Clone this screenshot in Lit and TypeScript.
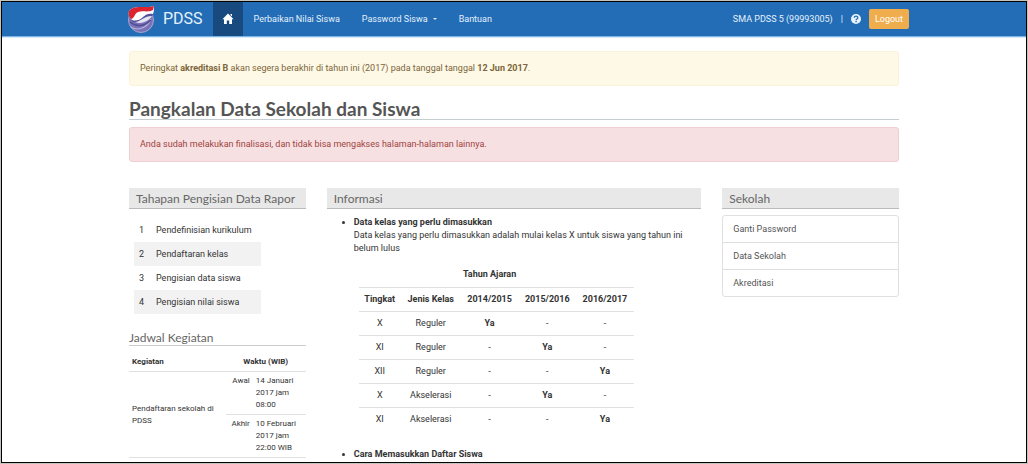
import { LitElement, html, css, svg } from "lit";
import { customElement } from "lit/decorators.js";

const STEPS = ["Pendefinisian kurikulum", "Pendaftaran kelas", "Pengisian data siswa", "Pengisian nilai siswa"];
const YEARS = ["2014/2015", "2015/2016", "2016/2017"];
const CLASSES = [
  { level: "X", kind: "Reguler", year: 0 },
  { level: "XI", kind: "Reguler", year: 1 },
  { level: "XII", kind: "Reguler", year: 2 },
  { level: "X", kind: "Akselerasi", year: 1 },
  { level: "XI", kind: "Akselerasi", year: 2 },
];
const LINKS = ["Ganti Password", "Data Sekolah", "Akreditasi"];

const logo = svg`
  <svg class="logo" viewBox="0 0 28 28" aria-hidden="true">
    <circle cx="14" cy="15" r="12.500" fill="#7a72b6" stroke="#a9a4cf" stroke-width="1"/>
    <path d="M4 22c6 4 16 2 20-8" fill="none" stroke="#b9b4da" stroke-width="1.200"/>
    <path d="M3 17c6 5 14 5 21-2" fill="none" stroke="#4f4b96" stroke-width="1.500"/>
    <path d="M2 6C8-1 17 4 27 1c0 6-1 10-4 13-5 4-13 4-17 3C2 14 1 10 2 6z" fill="#54529c"/>
    <path d="M2 6C8-1 17 4 27 1c0 3 0 6-1 8-4-1-7 0-10 3-4 4-8 4-11 3C2 12 1 10 2 6z" fill="#fff"/>
    <path d="M2 6C8-1 17 4 27 1l-1 4c-6 3-10 0-15 2-4 2-3 6-7 7C2 12 1 9 2 6z" fill="#dc2430"/>
    <path d="M8 17c6 0 8-6 17-6-2 4-10 9-17 6z" fill="#e6e4f1"/>
  </svg>`;

const home = svg`
  <svg class="home" viewBox="0 0 12 12" aria-hidden="true">
    <path d="M6 .6 11.600 6.200H10V11H7.200V7.500H4.800V11H2V6.200H.4L6 .6zM8.500 1H10v2.500L8.500 2z" fill="#fff"/>
  </svg>`;

@customElement("app-root")
export class AppRoot extends LitElement {
  static styles = css`
    :host {
      display: block;
      box-sizing: border-box;
      height: 100vh;
      padding: 1px;
      background: #c4c4bc;
      color: #333;
      font: 9px/13px Roboto, sans-serif;
    }
    * { box-sizing: border-box; }
    a { color: inherit; text-decoration: none; }
    h1, h2, ul, p { margin: 0; padding: 0; }
    .frame { height: 100%; overflow: hidden; border: 1px solid #000; background: #fff; }
    .container { max-width: 770px; margin: 0 auto; }
    .bar { background: #236db6; border-bottom: 1px solid #7fb3e2; box-shadow: 0 1px 0 #d6ecfb; color: #e4f1fc; }
    .bar .container { display: flex; align-items: center; height: 34px; }
    .brand { display: flex; align-items: center; gap: 8px; margin-left: -2px; padding-right: 10px; font-size: 16px; line-height: 34px; }
    .logo { width: 28px; height: 28px; }
    .nav { display: flex; align-self: stretch; align-items: center; }
    .nav a { display: flex; align-items: center; gap: 5px; height: 34px; padding: 0 11px; }
    .nav a.active { padding: 0 9px; background: #184a80; }
    .home { width: 12px; height: 12px; }
    .caret { width: 0; border: 2px solid transparent; border-top-color: #d9ebfa; border-bottom: 0; }
    .user { display: flex; align-items: center; gap: 8px; margin: 0 -10px 0 auto; }
    .help { width: 10px; height: 10px; }
    .logout { height: 20px; padding: 0 6px; border: 0; border-radius: 2px; background: #f0ad4e; color: #fff; font: 9px/20px Roboto, sans-serif; }
    .alert { padding: 10px; border: 1px solid; border-radius: 3px; }
    .warning { margin-top: 14px; background: #fef9e6; border-color: #fbf3d8; color: #7c6539; }
    .danger { background: #f6e0e1; border-color: #efcfd3; color: #a04442; }
    h1 { margin: 13px 0 7px; border-bottom: 1px solid #c5cfd2; color: #555; font: 700 19px/20px Lato, sans-serif; }
    .columns { display: grid; grid-template-columns: repeat(12, 1fr); column-gap: 21px; margin-top: 26px; align-items: start; }
    .side { grid-column: span 3; }
    .main { grid-column: span 6; }
    h2 { color: #666; font: 400 12px/14px Lato, sans-serif; border-bottom: 1px solid #ccc; }
    h2.filled { padding: 4px 7px 2px; background: #e8e8e8; border-color: #bbb; }
    table { border-collapse: collapse; }
    th, td { padding: 0; }
    .steps { width: 127px; margin: 9px 5px 17px; }
    .steps td { height: 24px; padding: 0 5px; }
    .steps td:first-child { width: 17px; padding-right: 0; }
    .steps tr:nth-child(even) { background: #f2f2f2; }
    .schedule { width: 100%; margin-top: 7px; font-size: 8px; line-height: 12px; }
    .schedule th, .schedule td { padding: 3px; border-bottom: 1px solid #e0e0e0; }
    .schedule th { height: 17px; text-align: center; }
    .schedule th:first-child { text-align: left; }
    .schedule .when { vertical-align: top; }
    .schedule .label { width: 27px; text-align: right; }
    .schedule .date { width: 53px; }
    .info { margin-top: 7px; padding-left: 27px; }
    .info li + li { margin-top: 17px; }
    .classes { width: 275px; margin: 8px 0 0 5px; table-layout: fixed; text-align: center; }
    .classes th, .classes td { height: 24px; padding: 0; }
    .classes th:first-child { width: 42px; }
    .classes th:nth-child(2) { width: 60px; }
    .classes tr + tr > * { border-top: 1px solid #e0e0e0; }
    .links { margin-top: 6px; list-style: none; border: 1px solid #e0e0e0; border-radius: 3px; }
    .links li + li { border-top: 1px solid #e0e0e0; }
    .links a { display: block; padding: 7px 10px 6px; color: #555; }
  `;

  render() {
    return html`
      <div class="frame">
        <header class="bar">
          <div class="container">
            <a class="brand" href="#">${logo}PDSS</a>
            <nav class="nav">
              <a class="active" href="#" aria-label="Beranda">${home}</a>
              <a href="#">Perbaikan Nilai Siswa</a>
              <a href="#">Password Siswa <span class="caret"></span></a>
              <a href="#">Bantuan</a>
            </nav>
            <div class="user">
              <span>SMA PDSS 5 (99993005)</span><span>|</span>
              <svg class="help" viewBox="0 0 10 10" aria-hidden="true">
                <circle cx="5" cy="5" r="5" fill="#e8f3fc" />
                <path d="M3.300 3.800C3.300 1.600 6.800 1.600 6.800 3.800 6.800 5 5.100 5 5.100 6.200M5.100 7v1.200" fill="none" stroke="#236db6" stroke-width="1.300" />
              </svg>
              <button class="logout">Logout</button>
            </div>
          </div>
        </header>
        <main class="container">
          <p class="alert warning">
            Peringkat <b>akreditasi B</b> akan segera berakhir di tahun ini (2017) pada tanggal tanggal <b>12 Jun 2017</b>.
          </p>
          <h1>Pangkalan Data Sekolah dan Siswa</h1>
          <p class="alert danger">Anda sudah melakukan finalisasi, dan tidak bisa mengakses halaman-halaman lainnya.</p>
          <div class="columns">
            <section class="side">
              <h2 class="filled">Tahapan Pengisian Data Rapor</h2>
              <table class="steps">
                ${STEPS.map((s, i) => html`<tr><td>${i + 1}</td><td>${s}</td></tr>`)}
              </table>
              <h2>Jadwal Kegiatan</h2>
              <table class="schedule">
                <tr><th>Kegiatan</th><th colspan="2">Waktu (WIB)</th></tr>
                <tr>
                  <td rowspan="2">Pendaftaran sekolah di PDSS</td>
                  <td class="when label">Awal</td><td class="when date">14 Januari 2017 jam 08:00</td>
                </tr>
                <tr><td class="when label">Akhir</td><td class="when date">10 Februari 2017 jam 22:00 WIB</td></tr>
              </table>
            </section>
            <section class="main">
              <h2 class="filled">Informasi</h2>
              <ul class="info">
                <li>
                  <b>Data kelas yang perlu dimasukkan</b><br />
                  Data kelas yang perlu dimasukkan adalah mulai kelas X untuk siswa yang tahun ini belum lulus
                  <table class="classes">
                    <tr><th></th><th></th><th>Tahun Ajaran</th><th></th><th></th></tr>
                    <tr><th>Tingkat</th><th>Jenis Kelas</th>${YEARS.map((y) => html`<th>${y}</th>`)}</tr>
                    ${CLASSES.map((c) => html`<tr>
                      <td>${c.level}</td><td>${c.kind}</td>
                      ${YEARS.map((_, i) => html`<td>${i === c.year ? html`<b>Ya</b>` : "-"}</td>`)}
                    </tr>`)}
                  </table>
                </li>
                <li><b>Cara Memasukkan Daftar Siswa</b></li>
              </ul>
            </section>
            <aside class="side">
              <h2 class="filled">Sekolah</h2>
              <ul class="links">${LINKS.map((l) => html`<li><a href="#">${l}</a></li>`)}</ul>
            </aside>
          </div>
        </main>
      </div>
    `;
  }
}
